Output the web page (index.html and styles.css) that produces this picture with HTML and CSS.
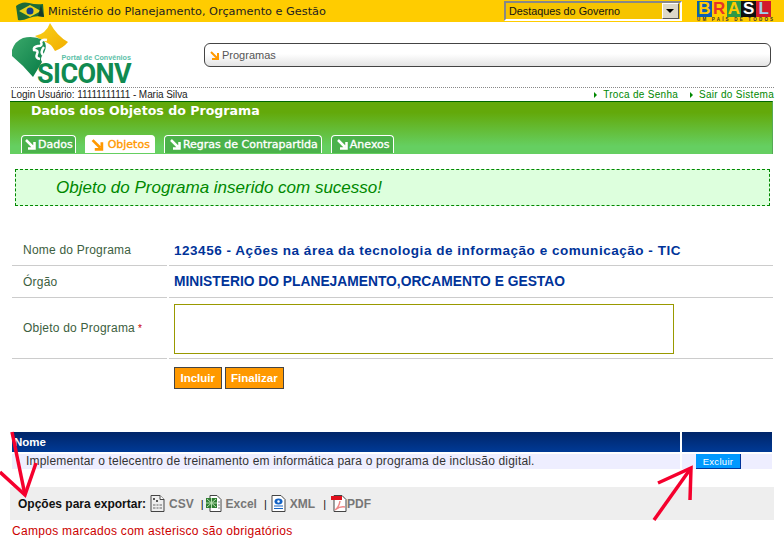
FILE: index.html
```html
<!DOCTYPE html>
<html lang="pt-BR">
<head>
    <meta charset="UTF-8">
    <title>Portal de Convênios - SICONV</title>
    <link rel="stylesheet" href="styles.css">
</head>
<body>
    <!-- Barra do governo -->
    <div class="gov-bar">
        <svg class="flag" width="28" height="20" viewBox="0 0 28 20">
            <path d="M0 5 Q6 0 13 2 T27 3 L28 16 Q20 14 13 17 T2 19 Z" fill="#1c6b38"/>
            <path d="M3 10 L14 4 L25 10 L14 16 Z" fill="#e8d21c"/>
            <circle cx="14" cy="10" r="3.500" fill="#123f8c"/>
            <path d="M25 4 L28 16 L22 15 Z" fill="#173a2a"/>
        </svg>
        <span class="gov-title">Ministério do Planejamento, Orçamento e Gestão</span>
        <div class="gov-select">
            <span>Destaques do Governo</span>
            <span class="gov-arrow"></span>
        </div>
        <div class="brasil">
            <div class="brasil-word">
                <b class="bl">B</b><b class="rd">R</b><b class="gr">A</b><b class="wh">S</b><b class="rd2">L</b>
            </div>
            <div class="brasil-sub">UM PAÍS DE TODOS</div>
        </div>
    </div>

    <!-- Logo e trilha -->
    <div class="top">
        <div class="logo">
            <svg class="logo-mark" width="60" height="58" viewBox="0 0 60 58">
                <defs>
                    <linearGradient id="logoYellow" x1="0" y1="0" x2="1" y2="1">
                        <stop offset="0" stop-color="#f9d21a"/>
                        <stop offset="1" stop-color="#f2ae00"/>
                    </linearGradient>
                    <linearGradient id="logoGreen" x1="0" y1="0" x2="1" y2="1">
                        <stop offset="0" stop-color="#3aa86a"/>
                        <stop offset="1" stop-color="#067a45"/>
                    </linearGradient>
                </defs>
                <path d="M24 13 Q35 11 39 0 Q46 13 57 19 Q52 25 44 28 Q40 20 32 18 Z" fill="url(#logoYellow)"/>
                <path d="M1 27 Q4 18 12 15 Q22 12 32 17 Q37 22 33 30 Q28 36 31 39 L22 54 Q12 42 1 33 Z" fill="url(#logoGreen)"/>
                <path d="M36 17 Q31 16 30 19 Q32 23 27 23 Q22 24 23 27 Q28 27 26 31 Q24 35 29 36 M33 24 Q29 29 32 32" stroke="#fff" stroke-width="2.500" fill="none"/>
            </svg>
            <div class="logo-text">
                <div class="logo-portal">Portal de Convênios</div>
                <div class="logo-name">SICONV</div>
            </div>
        </div>
        <div class="crumb">
            <svg class="arrow-icon" width="9" height="9" viewBox="0 0 9 9">
                <path d="M1 1 L7 7 M8 2 L8 8 L2 8" stroke="#f90" stroke-width="2" fill="none"/>
            </svg>
            <span>Programas</span>
        </div>
    </div>

    <div class="user-line">
        <span class="user">Login Usuário: 11111111111 - Maria Silva</span>
        <span class="user-links">
            <a>Troca de Senha</a>
            <a>Sair do Sistema</a>
        </span>
    </div>

    <!-- Cabeçalho verde com abas -->
    <div class="panel-head">
        <h1>Dados dos Objetos do Programa</h1>
        <div class="tabs">
            <div class="tab">
                <svg width="11" height="11" viewBox="0 0 11 11"><path d="M1 1 L8 8 M9.500 3 L9.500 9.500 L3 9.500" stroke="#fff" stroke-width="2.500" fill="none"/></svg>
                Dados
            </div>
            <div class="tab tab-active">
                <svg width="13" height="12" viewBox="0 0 11 11"><path d="M1 1 L8 8 M9.500 3 L9.500 9.500 L3 9.500" stroke="#f90" stroke-width="2.500" fill="none"/></svg>
                Objetos
            </div>
            <div class="tab">
                <svg width="11" height="11" viewBox="0 0 11 11"><path d="M1 1 L8 8 M9.500 3 L9.500 9.500 L3 9.500" stroke="#fff" stroke-width="2.500" fill="none"/></svg>
                Regras de Contrapartida
            </div>
            <div class="tab">
                <svg width="11" height="11" viewBox="0 0 11 11"><path d="M1 1 L8 8 M9.500 3 L9.500 9.500 L3 9.500" stroke="#fff" stroke-width="2.500" fill="none"/></svg>
                Anexos
            </div>
        </div>
    </div>

    <div class="success">Objeto do Programa inserido com sucesso!</div>

    <!-- Formulário -->
    <div class="form">
        <div class="label row-1">Nome do Programa</div>
        <div class="value row-1 code">123456 - Ações na área da tecnologia de informação e comunicação - TIC</div>
        <div class="label row-2">Órgão</div>
        <div class="value row-2">MINISTERIO DO PLANEJAMENTO,ORCAMENTO E GESTAO</div>
        <div class="label row-3">Objeto do Programa <span class="req">*</span></div>
        <div class="value row-3"><div class="textarea"></div></div>
    </div>
    <div class="buttons">
        <button class="btn">Incluir</button>
        <button class="btn">Finalizar</button>
    </div>

    <!-- Lista -->
    <div class="list">
        <div class="list-head">Nome</div>
        <div class="list-head"></div>
        <div class="list-cell">Implementar o telecentro de treinamento em informática para o programa de inclusão digital.</div>
        <div class="list-cell list-action"><button class="btn-delete">Excluir</button></div>
    </div>

    <div class="export">
        <b class="export-label">Opções para exportar:</b>
        <svg class="file-icon" width="15" height="17" viewBox="0 0 15 17">
            <path d="M1 .5 H10 L14 4.500 V16.500 H1 Z" fill="#eee" stroke="#444"/>
            <path d="M10 .5 V4.500 H14" fill="#fff" stroke="#444"/>
            <path d="M3 9 H12 V14 H3 Z" fill="#aaa"/>
            <path d="M3 11.500 H12 M6 9 V14 M9 9 V14" stroke="#eee"/>
            <path d="M3 3 H5 V5 H3 Z M6 5 H8 V7 H6 Z" fill="#555"/>
        </svg>
        <span class="export-link link-csv">CSV</span>
        <span class="sep">|</span>
        <svg class="file-icon" width="16" height="17" viewBox="0 0 16 17">
            <path d="M4 .5 H11 L15 4.500 V16.500 H4 Z" fill="#fff" stroke="#444"/>
            <path d="M0 3 H11 V13 H0 Z" fill="#2f7d32"/>
            <path d="M1 4 L10 12 M10 4 L1 12 M5.500 3 V13 M0 8 H11" stroke="#b8e0b0"/>
            <path d="M12 7 H14 M12 10 H14 M12 13 H14" stroke="#888"/>
        </svg>
        <span class="export-link link-excel">Excel</span>
        <span class="sep sep-xml">|</span>
        <svg class="file-icon" width="15" height="17" viewBox="0 0 15 17">
            <path d="M1 .5 H10 L14 4.500 V16.500 H1 Z" fill="#fff" stroke="#444"/>
            <ellipse cx="7.500" cy="6.500" rx="4" ry="3" fill="#1463c4"/>
            <circle cx="7.500" cy="6.500" r="1.200" fill="#fff"/>
            <path d="M3 11 H12 M3 13.500 H12" stroke="#1463c4"/>
        </svg>
        <span class="export-link link-xml">XML</span>
        <span class="sep sep-pdf">|</span>
        <svg class="file-icon" width="16" height="17" viewBox="0 0 16 17">
            <path d="M3 .5 H11 L15 4.500 V16.500 H3 Z" fill="#fff" stroke="#444"/>
            <path d="M0 1 H11 V5 H0 Z" fill="#e0101c"/>
            <path d="M9 6 Q8 12 4 15 Q9 11 14 12" stroke="#e88" stroke-width="1.500" fill="none"/>
        </svg>
        <span class="export-link link-pdf">PDF</span>
    </div>

    <div class="note">Campos marcados com asterisco são obrigatórios</div>

    <!-- Setas vermelhas desenhadas sobre a tela -->
    <svg class="marks" width="784" height="539" viewBox="0 0 784 539">
        <g stroke="#f5002d" fill="none" stroke-width="3.500">
            <path d="M12 432 L25 495"/>
            <path d="M0 472 L25 495 L36 463"/>
            <path d="M654 520 L691 468"/>
            <path d="M658 483 L691 468 L690 500"/>
        </g>
    </svg>
</body>
</html>
```

FILE: styles.css
```css
body {
    margin: 0;
    width: 784px;
    height: 539px;
    overflow: hidden;
    position: relative;
    background-color: #fff;
    font-family: "Liberation Sans", Arial, sans-serif;
}

/* Barra do governo */
.gov-bar {
    display: flex;
    align-items: center;
    height: 22px;
    background-color: #fc0;
}

.flag {
    margin-left: 16px;
}

.gov-title {
    margin-left: 4px;
    width: 281px;
    font-family: "DejaVu Sans", sans-serif;
    font-size: 11.300px;
    color: #222;
    white-space: nowrap;
}

.gov-select {
    display: flex;
    align-items: center;
    justify-content: space-between;
    box-sizing: border-box;
    width: 178px;
    height: 20px;
    margin-left: 175px;
    padding: 0 1px 0 3px;
    border: 2px solid #888;
    border-right-color: #fff;
    border-bottom-color: #fff;
    background-color: #f6c400;
    font-size: 10.800px;
    color: #111;
}

.gov-arrow {
    position: relative;
    width: 15px;
    height: 14px;
    background-color: #ddd8c8;
    border: 1px solid #555;
    border-top-color: #fff;
    border-left-color: #fff;
}

.gov-arrow::after {
    content: "";
    position: absolute;
    left: 3px;
    top: 5px;
    border: 4px solid transparent;
    border-top-color: #000;
    border-bottom: 0;
}

.brasil {
    margin-left: 15px;
    width: 74px;
    text-align: center;
}

.brasil-word {
    display: flex;
    height: 16px;
    font-size: 17px;
    line-height: 16px;
}

.brasil-word b {
    flex: 1;
    color: #fff;
}

.brasil-word .bl { background-color: #0b5fb0; color: #fc0; }
.brasil-word .rd { background-color: #fc0; color: #e8342a; }
.brasil-word .gr { background-color: #2d9a47; color: #fc0; }
.brasil-word .wh { background-color: #111; }
.brasil-word .rd2 { background-color: #d21a2c; color: #9fd0f0; }

.brasil-sub {
    font-size: 4.500px;
    line-height: 5px;
    font-weight: bold;
    letter-spacing: 2.200px;
    color: #333;
    white-space: nowrap;
}

/* Logo e trilha */
.top {
    display: flex;
    height: 65px;
    margin-left: 11px;
    width: 763px;
    border-bottom: 1px dotted #888;
}

.logo {
    position: relative;
    width: 193px;
}

.logo-mark {
    display: block;
    margin-top: 1px;
}

.logo-text {
    position: absolute;
    left: 16px;
    top: 31px;
    width: 104px;
    text-align: right;
}

.logo-portal {
    font-size: 7.200px;
    font-weight: bold;
    line-height: 10px;
    color: #5cbfa8;
}

.logo-name {
    font-family: Roboto, sans-serif;
    font-size: 27px;
    font-weight: bold;
    line-height: 22px;
    letter-spacing: -.6px;
    color: #108a50;
}

.crumb {
    display: flex;
    align-items: center;
    gap: 3px;
    box-sizing: border-box;
    width: 567px;
    height: 24px;
    margin-top: 21px;
    padding-left: 5px;
    border: 1px solid #444;
    border-radius: 6px;
    background: linear-gradient(#fff 45%, #e4e4e4);
    font-size: 11px;
    color: #555;
}

.user-line {
    display: flex;
    justify-content: space-between;
    width: 763px;
    margin-left: 11px;
    height: 13px;
    font-size: 10px;
    line-height: 14px;
    letter-spacing: -.07px;
    color: #222;
}

.user-links a {
    position: relative;
    color: #080;
    letter-spacing: .3px;
    margin-left: 18px;
}

.user-links a::before {
    content: "";
    position: absolute;
    left: -9px;
    top: 3px;
    border: 3px solid transparent;
    border-left-color: #080;
    border-right: 0;
}

/* Cabeçalho verde */
.panel-head {
    box-sizing: border-box;
    width: 763px;
    height: 53px;
    margin-left: 10px;
    padding: 0 0 0 21px;
    border-top: 1px solid #060;
    border-right: 1px solid #5a5;
    background: linear-gradient(#63a90a 20%, #65cf61 85%);
}

.panel-head h1 {
    margin: 0;
    height: 32px;
    font-family: "DejaVu Sans", sans-serif;
    font-size: 12.600px;
    line-height: 17px;
    font-weight: bold;
    color: #fff;
}

.tabs {
    display: flex;
    gap: 9px;
    margin-left: -10px;
}

.tab {
    display: flex;
    align-items: center;
    gap: 2px;
    height: 18px;
    box-sizing: border-box;
    padding: 0 2px 0 3px;
    margin-top: 1px;
    border: 1px solid #fff;
    border-bottom: 0;
    border-radius: 4px 4px 0 0;
    background-color: #4bb24b;
    font-family: "DejaVu Sans", sans-serif;
    font-size: 11px;
    -webkit-text-stroke: .35px currentColor;
    color: #fff;
    white-space: nowrap;
}

.tab-active {
    background-color: #fff;
    color: #f90;
    gap: 4px;
    padding: 0 4px 0 5px;
}

.tab-active ~ .tab {
    padding: 0 3px 0 5px;
}

.success {
    box-sizing: border-box;
    width: 755px;
    height: 37px;
    margin: 15px 0 0 15px;
    padding-left: 40px;
    border: 1px dashed #080;
    background-color: #dfd;
    font-size: 17px;
    font-style: italic;
    line-height: 35px;
    color: #080;
}

/* Formulário */
.form {
    display: grid;
    grid-template-columns: 155px 604px;
    column-gap: 2px;
    width: 761px;
    margin: 29px 0 0 12px;
}

.label,
.value {
    display: flex;
    align-items: center;
    box-sizing: border-box;
    border-bottom: 1px solid #ccc;
}

.label {
    padding-left: 11px;
    font-size: 12px;
    letter-spacing: .22px;
    color: #3c6040;
}

.value {
    padding-left: 5px;
    font-size: 13.800px;
    font-weight: bold;
    color: #039;
}

.code {
    font-size: 13.500px;
    letter-spacing: .53px;
}

.row-1 { height: 31px; }
.row-2 { height: 32px; }
.row-3 { height: 61px; }

.req {
    margin-left: 3px;
    font-size: 10px;
    color: #c00;
}

.textarea {
    box-sizing: border-box;
    width: 500px;
    height: 50px;
    margin-top: 1px;
    border: 1px solid #990;
    background-color: #fff;
}

.buttons {
    display: flex;
    gap: 3px;
    margin: 8px 0 0 174px;
}

.btn {
    box-sizing: border-box;
    height: 22px;
    padding: 0 5.500px;
    border: 1px solid #444;
    background-color: #f90;
    font-family: "Liberation Sans", Arial, sans-serif;
    font-size: 11.500px;
    font-weight: bold;
    color: #fff;
}

/* Lista */
.list {
    display: grid;
    grid-template-columns: 668px 90px;
    column-gap: 2px;
    row-gap: 2px;
    width: 760px;
    margin: 43px 0 0 12px;
}

.list-head {
    height: 20px;
    padding-left: 2px;
    background: linear-gradient(#002568, #003a96);
    font-size: 11.500px;
    font-weight: bold;
    line-height: 20px;
    color: #fff;
}

.list-cell {
    height: 15px;
    padding-left: 14px;
    background-color: #eef;
    font-size: 12px;
    letter-spacing: .18px;
    line-height: 15px;
    color: #333;
}

.btn-delete {
    display: block;
    box-sizing: border-box;
    width: 45px;
    height: 15px;
    padding: 0;
    border: 0;
    border-right: 1px solid #039;
    border-bottom: 1px solid #039;
    background-color: #09f;
    font-family: "Liberation Sans", Arial, sans-serif;
    font-size: 9.500px;
    letter-spacing: .3px;
    color: #fff;
}

.export {
    display: flex;
    align-items: center;
    box-sizing: border-box;
    width: 764px;
    height: 33px;
    margin: 18px 0 0 10px;
    padding-left: 8px;
    background-color: #eee;
    font-size: 12px;
}

.export-label {
    font-size: 12px;
    color: #111;
}

.file-icon {
    flex-shrink: 0;
}

.export-label + .file-icon {
    margin-left: 4px;
}

.export-link {
    font-weight: bold;
    color: #777;
}

.link-csv { margin-left: 4px; }
.link-excel { margin-left: 4px; }
.link-xml { margin-left: 4px; }

.sep {
    margin: 0 2px 0 7px;
    font-size: 11px;
    color: #111;
}

.sep-xml {
    margin: 0 4px 0 7px;
}

.sep-pdf {
    margin: 0 5px 0 8px;
}

.note {
    margin: 4px 0 0 12px;
    font-size: 12px;
    letter-spacing: .3px;
    color: #c00;
}

/* Setas sobre a tela */
.marks {
    position: absolute;
    left: 0;
    top: 0;
    pointer-events: none;
}
```
